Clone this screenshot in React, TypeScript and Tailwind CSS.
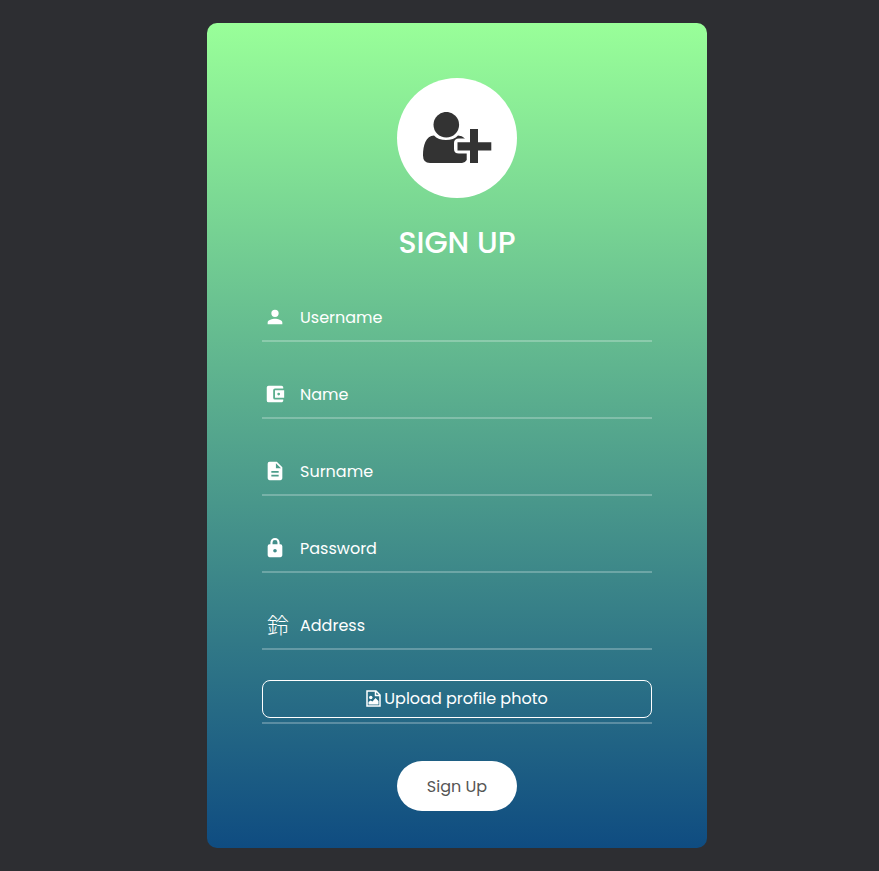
import type { ReactNode } from "react";

function Glyph({ d }: { d: string }) {
  return (
    <svg viewBox="0 0 24 24" className="size-[22px] fill-white" aria-hidden="true">
      <path fillRule="evenodd" d={d} />
    </svg>
  );
}

const person =
  "M12 12a4 4 0 1 0 0-8 4 4 0 0 0 0 8zm0 2c-2.67 0-8 1.34-8 4v2h16v-2c0-2.66-5.33-4-8-4z";
const wallet =
  "M21 18v1c0 1.1-.9 2-2 2H5a2 2 0 0 1-2-2V5a2 2 0 0 1 2-2h14c1.1 0 2 .9 2 2v1h-9a2 2 0 0 0-2 2v8a2 2 0 0 0 2 2h9zm-9-2h10V8H12v8zm4-2.5a1.5 1.5 0 1 1 0-3 1.5 1.5 0 0 1 0 3z";
const file =
  "M14 2H6a2 2 0 0 0-2 2v16a2 2 0 0 0 2 2h12a2 2 0 0 0 2-2V8l-6-6zm2 16H8v-2h8v2zm0-4H8v-2h8v2zm-3-5V3.5L18.500 9H13z";
const lock =
  "M18 8h-1V6A5 5 0 0 0 7 6v2H6a2 2 0 0 0-2 2v10a2 2 0 0 0 2 2h12a2 2 0 0 0 2-2V10a2 2 0 0 0-2-2zm-6 9a2 2 0 1 1 0-4 2 2 0 0 1 0 4zm2.700-9H9.300V6a2.700 2.700 0 0 1 5.400 0v2z";

type Field = { id: string; label: string; type: string; icon: ReactNode };

const fields: Field[] = [
  { id: "username", label: "Username", type: "text", icon: <Glyph d={person} /> },
  { id: "name", label: "Name", type: "text", icon: <Glyph d={wallet} /> },
  { id: "surname", label: "Surname", type: "text", icon: <Glyph d={file} /> },
  { id: "password", label: "Password", type: "password", icon: <Glyph d={lock} /> },
  {
    id: "address",
    label: "Address",
    type: "text",
    icon: (
      <span className="pb-1 pl-[3px] font-['Noto_Sans_CJK_JP',sans-serif] text-[22px] leading-[22px] font-light">鈴</span>
    ),
  },
];

export default function App() {
  return (
    <main className="flex min-h-screen items-center justify-center bg-[#2d2e32] py-4 pr-[15px] pl-[50px] font-['Poppins',sans-serif] text-white">
      <form
        className="flex w-full max-w-[500px] flex-col items-center rounded-[10px] bg-[linear-gradient(180deg,#9f9,#0f4c81)] px-[55px] pt-[55px] pb-[37px]"
        onSubmit={(e) => e.preventDefault()}
      >
        <div className="flex size-[120px] items-center justify-center rounded-full bg-white">
          <svg viewBox="0 0 70 52" className="h-[52px] w-[70px] fill-[#333]" aria-hidden="true">
            <path d="M12 23.500C17 29.500 31 29.500 36 23.500Q40 23.700 43 26.500H37Q32 26.500 32 31V37Q32 41.500 37 41.500H44.700V48Q43 51 40 51H8Q1 51 1 43.500C1 33 4 24 12 23.500Z" />
            <circle cx="24.300" cy="12.700" r="12.800" />
            <path d="M48 17h8v13.300h13.300v8.200H56V51h-8V38.500H35.500v-8.200H48z" />
          </svg>
        </div>
        <h1 className="pt-[27px] pb-[34px] text-[30px] leading-9 font-medium">SIGN UP</h1>

        <div className="flex w-full flex-col gap-[30px]">
          {fields.map((f) => (
            <div key={f.id} className="flex h-[47px] items-start border-b-2 border-white/25">
              <label htmlFor={f.id} aria-label={f.label} className="flex h-11 w-[38px] shrink-0 items-center pl-0.5">
                {f.icon}
              </label>
              <input
                id={f.id}
                name={f.id}
                type={f.type}
                placeholder={f.label}
                className="h-full min-w-0 flex-1 bg-transparent text-base text-white outline-none placeholder:text-white"
              />
            </div>
          ))}
          <div className="border-b-2 border-white/25 pb-1">
            <input id="photo" type="file" accept="image/*" className="sr-only" />
            <label
              htmlFor="photo"
              className="flex h-[38px] cursor-pointer items-center justify-center gap-[3px] rounded-lg border border-white text-base"
            >
              <svg viewBox="0 0 15 18" className="h-[18px] w-[15px]" aria-hidden="true">
                <path d="M1 1h9l4 4v11H1zM9.500 1v4.500H14" fill="none" stroke="white" strokeWidth="1.500" />
                <circle cx="4.800" cy="7.500" r="1.700" fill="white" />
                <path d="M2.500 14.500v-2.500l2-1.500 2 1L9.500 8l3 3v3.500z" fill="white" />
              </svg>
              Upload profile photo
            </label>
          </div>
        </div>

        <button type="submit" className="mt-[37px] h-[50px] min-w-[120px] cursor-pointer rounded-full bg-white px-5 pt-0.5 text-base text-[#555]">
          Sign Up
        </button>
      </form>
    </main>
  );
}
